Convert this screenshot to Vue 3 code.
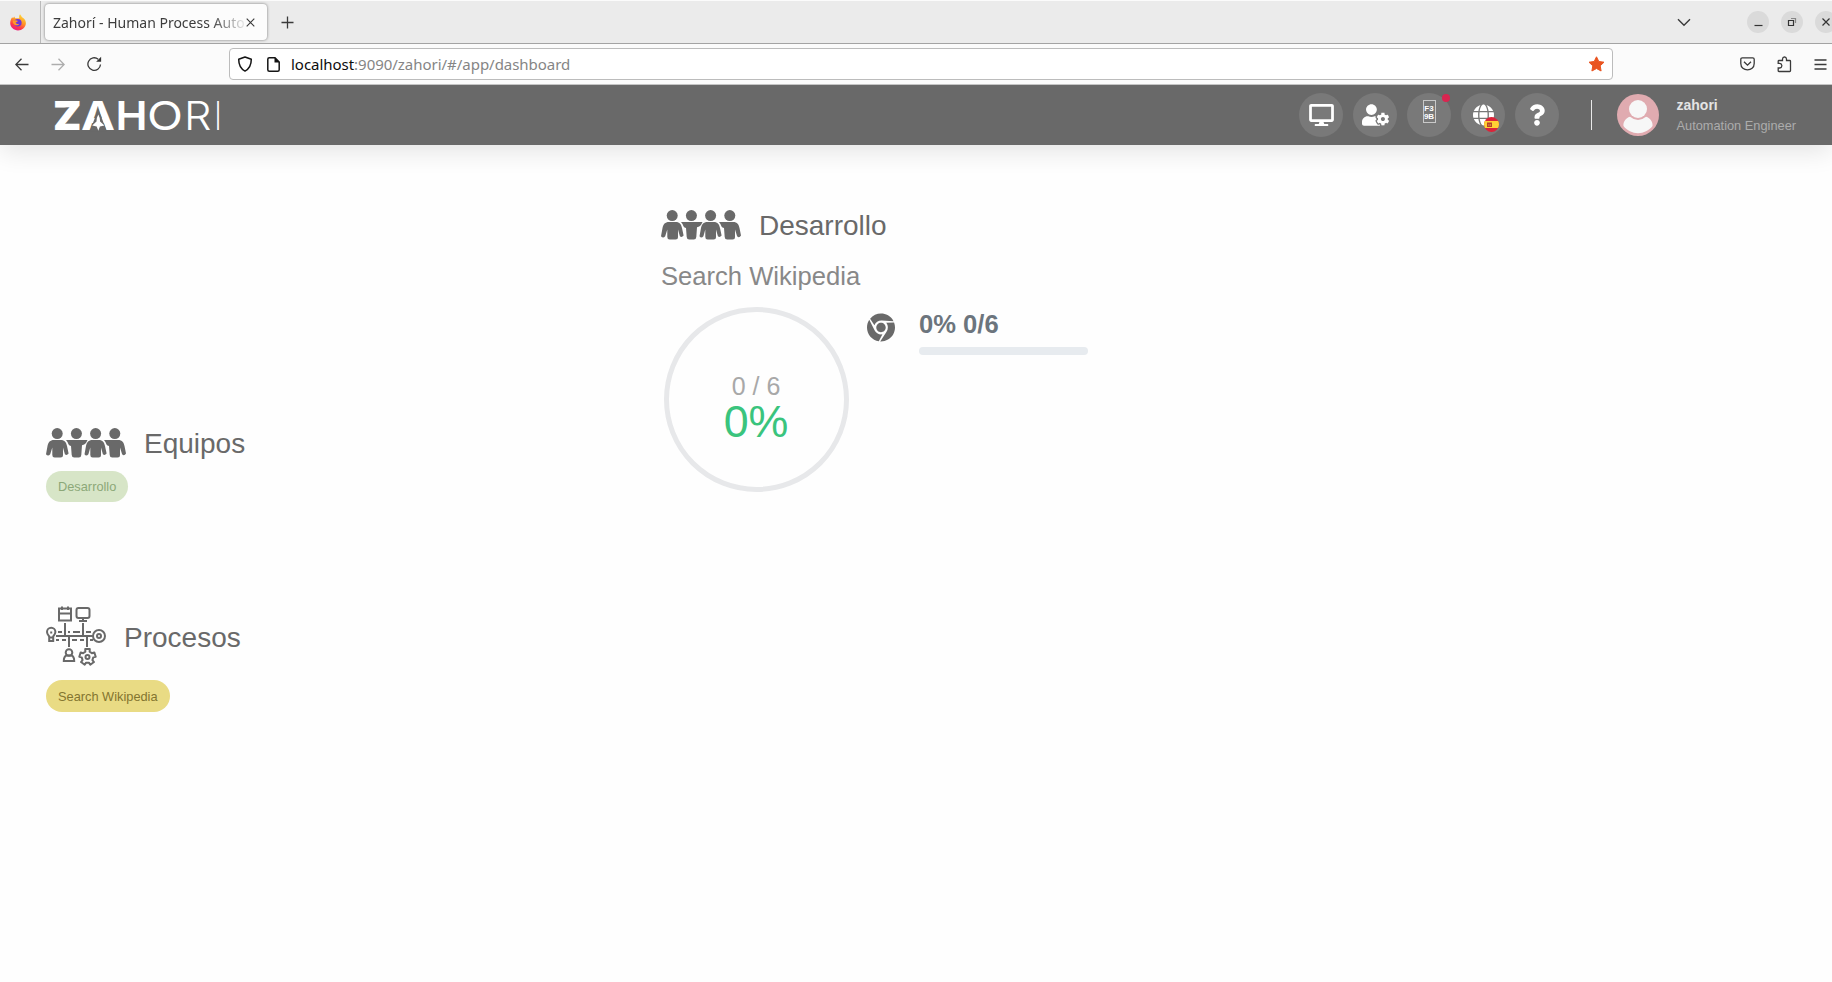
<script setup>
const teams = ['Desarrollo']
const processes = ['Search Wikipedia']
const people = [11.2, 30.4, 49.6, 68.8]
const logo = [
  { c: 'Z', x: 53, w: 28.5, weight: 900 },
  { c: 'A', x: 81, w: 34, weight: 700 },
  { c: 'H', x: 115.5, w: 32, weight: 600 },
  { c: 'O', x: 147, w: 36, weight: 400 },
  { c: 'R', x: 184, w: 27.5, weight: 300 },
  { c: 'I', x: 213.5, w: 9, weight: 200 },
]
// Five-toothed cog outline, two points per tooth tip and two per root.
const gear = [-90, -18, 54, 126, 198]
  .flatMap((a) => [[a - 22, 5.8], [a - 16, 8.2], [a + 16, 8.2], [a + 22, 5.8]])
  .map(([a, r]) => {
    const t = (a * Math.PI) / 180
    return `${(41.5 + r * Math.cos(t)).toFixed(2)},${(51 + r * Math.sin(t)).toFixed(2)}`
  })
  .join(' ')
</script>

<template>
  <div class="page">
    <svg class="defs" aria-hidden="true">
      <symbol id="team" viewBox="0 0 80 30">
        <circle v-for="x in people" :key="x" :cx="x" cy="5.600" r="5.500" />
        <path d="M8 12h6.500c4.500 0 5.600 2.500 6.500 6l1.600 7.500q-1.800 2.500-3.700.8L17 19.500V27q0 2.500-2.500 2.500H8.700Q6.300 29.500 6.300 27v-7.500L4.200 26.300Q2 28.700 0 26.300L1.500 18c.8-3.800 2.500-6 6.500-6z" />
        <path d="M20 12h21.500l-1.500 3q-1.600 1.800-4 2.200L35.300 27q-.2 2.500-2.500 2.500h-4.600q-2.300 0-2.500-2.500L25 18q-1.700-.6-2.400-1.600-.9-2.700-2.600-4.400z" />
        <path d="M46.500 12h6c4.500 0 5.600 2.500 6.500 6l1.600 7.500q-1.800 2.500-3.700.8L55 19.500V27q0 2.500-2.500 2.500h-5.800q-2.400 0-2.400-2.500v-7.500l-1.900 6.800q-2.200 2.400-3.900 0L40 18c.8-3.800 2.500-6 6.500-6z" />
        <path d="M58 12h14c4.500 0 5.600 2.500 6.500 6l1.500 7.500q-1.700 2.800-3.900.8l-2.100-6.800V27q0 2.500-2.500 2.500h-5.300q-2.400 0-2.500-2.500L63 18q-1.800-.6-2.500-1.600Q59.600 13.700 58 12z" />
      </symbol>
    </svg>

    <div class="tabs">
      <div class="pinned">
        <svg width="16" height="17" viewBox="0 0 16 17">
          <defs>
            <linearGradient id="fire" x1=".8" y1="0" x2=".3" y2="1">
              <stop offset="0" stop-color="#ffe23c" /><stop offset=".45" stop-color="#ff9425" />
              <stop offset=".75" stop-color="#ff3b47" /><stop offset="1" stop-color="#e8178a" />
            </linearGradient>
          </defs>
          <path fill="url(#fire)" d="M10 .3c1 1 1.500 1.800 1.800 2.800C13.500 4 16 6 15.900 9.500 15.500 13.500 12 16.400 8 16.400S.2 13.300.2 9c0-2.600 1-4.500 2-5.800l.8 1 1.200-1.700.9 1.700 4.200.1c-.4-1.400 0-3 .7-4z" />
          <circle cx="7.800" cy="8.700" r="3.800" fill="#6f36d8" />
          <path fill="#ff9a28" d="M3 6.800c1.500-1 3.500-.8 5 .2-.5 1-1.800 1-2.300 1.600.2 1.400 2 1.900 3.500 1.200-.8 1.900-3.600 2-5 .7C3 9.400 2.600 8 3 6.800z" />
        </svg>
      </div>
      <div class="tab">
        <span class="title">Zahorí - Human Process Automation</span>
        <svg width="9" height="9" viewBox="0 0 9 9" class="line thin"><path d="M.7.700l7.600 7.600M8.300.700L.7 8.300" /></svg>
      </div>
      <svg class="plus line" width="13" height="13" viewBox="0 0 13 13"><path d="M6.500.500v12M.5 6.500h12" /></svg>
      <svg class="down line" width="14" height="9" viewBox="0 0 14 9"><path d="M1 1.200l6 6 6-6" /></svg>
      <div class="win">
        <span><svg width="22" height="22"><path d="M7.500 14.500h8" /></svg></span>
        <span><svg width="22" height="22"><path d="M7.500 9.500h5v5h-5z" /><path d="M10 7.500h4.500V12" opacity=".5" /></svg></span>
        <span><svg width="22" height="22"><path d="M7.500 7.500l7 7M14.500 7.500l-7 7" /></svg></span>
      </div>
    </div>

    <div class="toolbar">
      <svg class="line" width="14" height="13" viewBox="0 0 14 13"><path d="M13.500 6.500H1M6.500.800L.8 6.500l5.700 5.700" /></svg>
      <svg class="line faded" width="14" height="13" viewBox="0 0 14 13"><path d="M.5 6.500H13M7.500.800l5.700 5.700-5.700 5.700" /></svg>
      <svg class="line" width="15" height="16" viewBox="0 0 15 16"><path d="M13.500 8.500a6.300 6.300 0 1 1-2.300-5.300" /><path d="M14.100.800v5h-5z" fill="#333" stroke="none" /></svg>
      <div class="url">
        <svg class="line dark" width="16" height="16" viewBox="0 0 16 16"><path d="M8 1l6.300 2.300c0 5.300-1.300 9.200-6.300 11.800C3 12.500 1.700 8.600 1.700 3.300z" stroke-linejoin="round" /></svg>
        <svg class="line dark" width="13" height="15" viewBox="0 0 13 15"><path d="M8 .800H2.300Q.8.800.8 2.300v10.400q0 1.500 1.500 1.500h8.400q1.500 0 1.500-1.500V5z" /><path d="M7.500.500v5h5z" fill="#111" stroke="none" /></svg>
        <p><b>localhost</b>:9090/zahori/#/app/dashboard</p>
        <svg class="star" width="17" height="16" viewBox="0 0 17 16"><path fill="#e95420" stroke="#e95420" stroke-linejoin="round" d="M8.500.800l2.300 4.700 5.200.7-3.800 3.600.9 5.200-4.600-2.500L3.900 15l.9-5.200L1 6.200l5.200-.7z" /></svg>
      </div>
      <div class="tools">
        <svg class="line" width="15" height="14" viewBox="0 0 15 14"><path d="M2.300.800h10.400q1.500 0 1.500 1.500V6.500c0 8.600-13.400 8.600-13.400 0V2.300q0-1.500 1.500-1.500z" /><path d="M4 4.800l3.500 3.400L11 4.800" /></svg>
        <svg class="line" width="15" height="17" viewBox="0 0 15 17"><path d="M1.200 7V5.300q0-.8.800-.8h3.500V3q.2-2 2-2.200 1.800.2 2 2.200v1.500h3.200q.8 0 .8.800v9.400q0 .8-.8.800H2q-.8 0-.8-.8V12h1.500q2-.2 2.200-2.300Q4.700 7.500 2.700 7.300H1.200z" /></svg>
        <svg class="line" width="13" height="11" viewBox="0 0 13 11"><path d="M.5 1h12M.5 5.500h12M.5 10h12" /></svg>
      </div>
    </div>

    <header>
      <svg class="brand" width="172" height="60" viewBox="52 85 172 60">
        <text v-for="l in logo" :key="l.c" :x="l.x" y="130" :textLength="l.w" lengthAdjust="spacingAndGlyphs" :font-weight="l.weight">{{ l.c }}</text>
        <path fill="#696969" d="M98.300 109l8.600 22.500H89.700z" />
        <path d="M98.300 114.500q1.800 3 1.800 7l4.300 4-4.500 1-1.600 4.300-1.600-4.300-4.500-1 4.300-4q0-4 1.800-7z" />
      </svg>
      <nav>
        <button><svg width="25" height="22" viewBox="0 0 576 512"><path d="M528 0H48C21.500 0 0 21.500 0 48v320c0 26.500 21.500 48 48 48h192l-16 48h-72c-13.300 0-24 10.700-24 24s10.700 24 24 24h272c13.300 0 24-10.700 24-24s-10.700-24-24-24h-72l-16-48h192c26.500 0 48-21.500 48-48V48c0-26.500-21.500-48-48-48zm-16 352H64V64h448v288z" /></svg></button>
        <button><svg width="27" height="22" viewBox="0 0 640 512"><path d="M610.500 373.300c2.600-14.100 2.600-28.500 0-42.600l25.800-14.900c3-1.700 4.300-5.200 3.300-8.500-6.700-21.600-18.200-41.200-33.200-57.400-2.300-2.500-6-3.100-9-1.400l-25.800 14.900c-10.900-9.300-23.400-16.500-36.900-21.300v-29.800c0-3.400-2.400-6.400-5.700-7.100-22.300-5-45-4.800-66.200 0-3.300.7-5.700 3.700-5.700 7.100v29.800c-13.500 4.800-26 12-36.900 21.300l-25.800-14.900c-2.900-1.700-6.700-1.100-9 1.400-15 16.200-26.500 35.800-33.200 57.400-1 3.300.4 6.800 3.300 8.500l25.800 14.900c-2.600 14.100-2.600 28.500 0 42.600l-25.800 14.900c-3 1.700-4.300 5.200-3.300 8.500 6.700 21.600 18.200 41.100 33.200 57.400 2.300 2.500 6 3.100 9 1.400l25.800-14.900c10.900 9.300 23.400 16.500 36.900 21.300v29.800c0 3.400 2.400 6.400 5.700 7.100 22.300 5 45 4.800 66.200 0 3.300-.7 5.700-3.700 5.700-7.100v-29.800c13.500-4.800 26-12 36.900-21.300l25.800 14.900c2.900 1.700 6.700 1.100 9-1.400 15-16.200 26.500-35.800 33.200-57.400 1-3.300-.4-6.800-3.300-8.500l-25.800-14.900zM496 400.500c-26.800 0-48.500-21.800-48.500-48.500s21.800-48.500 48.500-48.500 48.500 21.800 48.500 48.500-21.700 48.500-48.500 48.500zM224 256c70.700 0 128-57.300 128-128S294.700 0 224 0 96 57.300 96 128s57.300 128 128 128zm201.200 226.500c-2.300-1.200-4.600-2.600-6.800-3.900l-7.900 4.600c-6 3.400-12.800 5.300-19.600 5.300-10.900 0-21.400-4.600-28.900-12.600-18.300-19.800-32.300-43.900-40.200-69.600-5.500-17.700 1.900-36.400 17.900-45.700l7.900-4.600c-.1-2.600-.1-5.200 0-7.800l-7.900-4.600c-16-9.200-23.400-28-17.900-45.700.9-2.900 2.200-5.800 3.200-8.700-3.800-.3-7.500-1.200-11.400-1.200h-16.700c-22.200 10.200-46.900 16-72.900 16s-50.600-5.800-72.900-16h-16.700C60.200 288 0 348.200 0 422.400V464c0 26.500 21.500 48 48 48h352c10.100 0 19.500-3.200 27.200-8.500-1.200-3.800-2-7.700-2-11.800v-9.200z" /></svg></button>
        <button><span class="glyph"><i>F3</i><i>9B</i></span><em class="dot"></em></button>
        <button>
          <svg width="21" height="22" viewBox="0 0 496 512"><path d="M336.500 160C322 70.700 287.800 8 248 8s-74 62.700-88.500 152h177zM152 256c0 22.200 1.200 43.500 3.300 64h185.300c2.100-20.500 3.300-41.800 3.300-64s-1.200-43.500-3.300-64H155.300c-2.100 20.500-3.300 41.800-3.300 64zm324.700-96c-28.600-67.900-86.500-120.400-158-141.600 24.400 33.800 41.200 84.700 50 141.600h108zM177.200 18.400C105.800 39.600 47.800 92.100 19.300 160h108c8.700-56.900 25.500-107.800 49.900-141.600zM487.400 192H372.700c2.100 21 3.300 42.500 3.300 64s-1.200 43-3.300 64h114.600c5.500-20.500 8.600-41.800 8.600-64s-3.100-43.500-8.500-64zM120 256c0-21.500 1.200-43 3.300-64H8.600C3.200 212.500 0 233.800 0 256s3.200 43.500 8.600 64h114.600c-2-21-3.200-42.500-3.200-64zm39.500 96c14.500 89.300 48.700 152 88.500 152s74-62.700 88.500-152h-177zm159.300 141.600c71.400-21.200 129.400-73.700 158-141.600h-108c-8.800 56.900-25.600 107.800-50 141.600zM19.300 352c28.600 67.900 86.500 120.400 158 141.600-24.400-33.800-41.200-84.700-50-141.600h-108z" /></svg>
          <svg class="flag" width="15" height="15" viewBox="0 0 15 15">
            <clipPath id="round"><circle cx="7.500" cy="7.500" r="7.500" /></clipPath>
            <g clip-path="url(#round)"><path fill="#dc2339" d="M0 0h15v15H0z" /><path fill="#ffd034" d="M0 4h15v7H0z" /><path fill="#b5432a" d="M3 5.500h5V10H3z" /><path fill="#e8a23a" d="M4.500 7h.8v2h-.8zM6.300 7H7v2h-.7z" /></g>
          </svg>
        </button>
        <button><svg width="16" height="22" viewBox="0 0 384 512"><path d="M202.021 0C122.202 0 70.503 32.703 29.914 91.026c-7.363 10.580-5.093 25.086 5.178 32.874l43.138 32.709c10.373 7.865 25.132 6.026 33.253-4.148 25.049-31.381 43.630-49.449 82.757-49.449 30.764 0 68.816 19.799 68.816 49.631 0 22.552-18.617 34.134-48.993 51.164-35.423 19.860-82.299 44.576-82.299 106.405V320c0 13.255 10.745 24 24 24h72.471c13.255 0 24-10.745 24-24v-5.773c0-42.860 125.268-44.645 125.268-160.627C377.504 66.256 286.902 0 202.021 0zM192 373.459c-38.196 0-69.271 31.075-69.271 69.271 0 38.195 31.075 69.270 69.271 69.270s69.271-31.075 69.271-69.271-31.075-69.270-69.271-69.270z" /></svg></button>
      </nav>
      <div class="divider"></div>
      <svg class="avatar" width="42" height="42" viewBox="0 0 42 42">
        <circle cx="21" cy="21" r="21" fill="#e0abb0" />
        <path fill="#f7f7f7" d="M13 22.700q8 6.500 16 0c4.500 1.300 7 5.300 6.500 9.300-7 9.500-22 9.500-29 0-.5-4 2-8 6.500-9.300z" />
        <circle cx="21" cy="15" r="10.200" fill="#e0abb0" /><circle cx="21" cy="15" r="9" fill="#f7f7f7" />
      </svg>
      <div class="user"><strong>zahori</strong><span>Automation Engineer</span></div>
    </header>

    <main>
      <aside>
        <section class="teams">
          <h2><svg width="80" height="30"><use href="#team" /></svg>Equipos</h2>
          <span v-for="t in teams" :key="t" class="pill green">{{ t }}</span>
        </section>
        <section class="procs">
          <h2>
            <svg class="flow" width="60" height="60" viewBox="0 0 60 60">
              <path d="M13 2.500h12v12H13zM13 7.500h12M16 .500V4M22 .500V4" />
              <path d="M32.500 2h9q2 0 2 2v6q0 2-2 2h-9q-2 0-2-2V4q0-2 2-2zM37 12v3M33 15h8" />
              <path d="M10 30h37M19 17v13M37 17v13M23 30v11M41 30v11" />
              <path d="M12 26h4M22 26h2M27 26h7M40 26h5M10 34h3M16 34h4M26 34h5M34 34h4M44 34h3" />
              <circle cx="53" cy="30" r="6" /><circle cx="53" cy="30" r="2" />
              <path d="M3.200 30.500C1.800 28.800 1 27.700 1 26a4.200 4.200 0 0 1 8.400 0c0 1.700-.8 2.800-2.200 4.500V35h-4zM3.200 31.500h4M5.200 25.500v2" />
              <circle cx="23" cy="46.500" r="3.300" /><path d="M17.800 55c0-3.500 1.200-5 2.700-5.500h5c1.500.5 2.700 2 2.700 5.500z" />
              <polygon :points="gear" stroke-linejoin="round" />
              <circle cx="41.500" cy="51" r="2" />
            </svg><span>Procesos</span>
          </h2>
          <span v-for="p in processes" :key="p" class="pill yellow">{{ p }}</span>
        </section>
      </aside>

      <article>
        <h2><svg width="80" height="30"><use href="#team" /></svg>Desarrollo</h2>
        <h3>Search Wikipedia</h3>
        <div class="stats">
          <div class="ring"><span>0 / 6</span><strong>0%</strong></div>
          <svg class="chrome" width="28" height="29" viewBox="0 0 496 512"><path d="M131.500 217.500L55.100 100.100c47.600-59.200 119-91.800 192-92.100 42.300-.3 85.500 10.500 124.800 33.200 43.400 25.200 76.400 61.400 97.400 103L264 133.400c-58.100-3.400-113.400 29.300-132.500 84.100zm32.900 38.500c0 46.200 37.400 83.600 83.600 83.600s83.600-37.400 83.600-83.600-37.400-83.600-83.600-83.600-83.600 37.300-83.600 83.600zm314.900-89.200L339.600 174c37.900 44.300 38.500 108.200 6.600 157.200L234.100 503.600c46.500 2.500 94.400-7.700 137.800-32.900 107.400-62 150.900-192 107.400-303.900zM133.700 303.600L40.400 120.100C14.900 159.100 0 205.900 0 256c0 124 90.800 226.700 209.500 244.900l63.700-124.800c-57.600 10.800-113.200-20.800-139.500-72.500z" /></svg>
          <div class="score"><strong>0% 0/6</strong><div class="bar"></div></div>
        </div>
      </article>
    </main>
  </div>
</template>

<style>
body { background: #fefefe; overflow: hidden; }
</style>

<style scoped>
* { box-sizing: border-box; }
.page { width: 1832px; height: 982px; overflow: hidden; background: #fefefe; font-family: "Liberation Sans", Arial, sans-serif; }
svg { display: block; flex: none; }
.defs { position: absolute; width: 0; height: 0; }
.line { fill: none; stroke: #3a3a3a; stroke-width: 1.3; }
.thin { stroke-width: 1.1; }
.dark { stroke: #151515; stroke-width: 1.5; }
.faded { opacity: .4; }

.tabs { position: relative; z-index: 1; height: 44px; display: flex; align-items: center; background: #ebebeb; border-top: 1px solid #fbfbfb; border-bottom: 1px solid #a3a3a3; }
.pinned { width: 41px; height: 100%; padding: 13px 0 0 10px; border-right: 1px solid #bababa; }
.tab { width: 222px; height: 36px; margin: 0 0 0 4px; padding: 0 12px 0 8px; display: flex; align-items: center; background: #fcfcfc; border-radius: 4px; box-shadow: 0 0 3px rgba(0,0,0,.5); }
.title { width: 191px; margin-right: 2px; overflow: hidden; white-space: nowrap; font: 14px/20px "Noto Sans", "Open Sans", sans-serif; color: #3d3d3d; -webkit-mask-image: linear-gradient(90deg, #000 158px, transparent 195px); mask-image: linear-gradient(90deg, #000 158px, transparent 195px); }
.title { padding-top: 1px; }
.plus { margin-left: 14px; }
.down { margin: 0 0 0 auto; stroke-width: 1.4; }
.win { display: flex; gap: 12px; margin: 0 -5px 0 56px; }
.win span { width: 22px; height: 22px; border-radius: 50%; background: #dadada; }
.win path { fill: none; stroke: #333; stroke-width: 1.2; }

.toolbar { position: relative; z-index: 1; height: 41px; display: flex; align-items: center; background: #fbfbfb; border-bottom: 1px solid #c4c4c4; padding-left: 15px; gap: 22px; }
.url { width: 1384px; height: 32px; margin-left: 105px; padding: 0 7px; display: flex; align-items: center; background: #fff; border: 1px solid #bcbcbc; border-radius: 4px; }
.url p { margin: 0 0 0 11px; font: 15px/22px "Noto Sans", "Open Sans", sans-serif; letter-spacing: -.03px; color: #858585; white-space: nowrap; }
.url b { font-weight: 400; color: #0c0c0c; }
.url .dark + .dark { margin-left: 14px; }
.star { margin-left: auto; }
.tools { display: flex; align-items: center; gap: 22px; margin: 0 5px 0 auto; }

header { position: relative; height: 60px; display: flex; align-items: center; background: #696969; box-shadow: 0 6px 26px rgba(0,0,0,.11); padding-left: 52px; }
.brand { font-family: Inter, "Open Sans", sans-serif; font-size: 40px; fill: #fff; }
nav { display: flex; gap: 10px; margin-left: 1075px; }
button { position: relative; width: 44px; height: 44px; padding: 0; border: 0; border-radius: 50%; background: #797979; display: flex; align-items: center; justify-content: center; }
button path { fill: #fff; }
.flag { position: absolute; left: 23px; top: 24px; }
.flag path:nth-child(1) { fill: #dc2339; }
.flag path:nth-child(2) { fill: #ffd034; }
.flag path:nth-child(3) { fill: #b5432a; }
.flag path:nth-child(4) { fill: #e8a23a; }
.glyph { width: 13px; height: 23px; margin-top: -7px; padding-top: 3px; border: 1px solid #c9c9c9; display: flex; flex-direction: column; justify-content: center; align-items: center; }
.glyph i { font: bold 8px/8px "Liberation Sans", sans-serif; color: #fff; }
.dot { position: absolute; left: 35px; top: 1px; width: 8px; height: 8px; border-radius: 50%; background: #d92550; }
.divider { width: 1px; height: 30px; margin: 0 25px 0 32px; background: #e9e9e9; }
.user { margin-left: 17.500px; display: flex; flex-direction: column; white-space: nowrap; }
.user strong { font-size: 14px; line-height: 20px; color: #e4e4e4; }
.user span { font-size: 12.8px; line-height: 20px; color: #acacac; padding-top: 1px; margin-bottom: -1px; }

main { display: flex; }
h2, h3 { margin: 0; font-weight: 400; }
h2 { display: flex; align-items: center; font-size: 28px; line-height: 34px; color: #696969; fill: #696969; }
h2 svg { margin-right: 18px; }
aside { width: 615px; padding: 282px 0 0 46px; }
aside h2 { height: 34px; }
.teams svg { margin-top: -2px; }
.pill { display: block; width: max-content; padding: 0 12px; border-radius: 16px; font-size: 12.8px; }
.green { height: 31px; line-height: 32px; margin-top: 10px; background: #d7e5c7; color: #8ca878; }
.yellow { height: 32px; line-height: 33px; margin-top: 14px; background: #e9db84; color: #83752f; }
.procs { margin-top: 103px; }
.procs h2 { height: 61px; }
.procs h2 span { padding-top: 4px; }
.flow { fill: none; stroke: #696969; stroke-width: 2; }
article { padding-top: 64px; margin-left: 46px; }
article h2 svg { margin-top: -3px; }
h3 { margin-top: 18px; font-size: 25.6px; line-height: 30px; color: #888; }
.stats { display: flex; margin-top: 16px; }
.ring { width: 185px; height: 185px; margin-left: 2.500px; border: 5px solid #e7e8ea; border-radius: 50%; display: flex; flex-direction: column; align-items: center; padding-top: 60px; }
.ring span { font-size: 25px; line-height: 29px; color: #a8a8a8; }
.ring strong { font-weight: 400; font-size: 44.800px; line-height: 41px; color: #3ac47d; }
.chrome { margin: 5.500px 0 0 18.500px; fill: #696969; }
.score { margin-left: 24px; padding-top: 2px; }
.score strong { display: block; font-size: 25.6px; line-height: 30px; color: #6c757d; }
.bar { width: 169px; height: 8px; margin-top: 8px; border-radius: 4px; background: #e7ebef; }
</style>
